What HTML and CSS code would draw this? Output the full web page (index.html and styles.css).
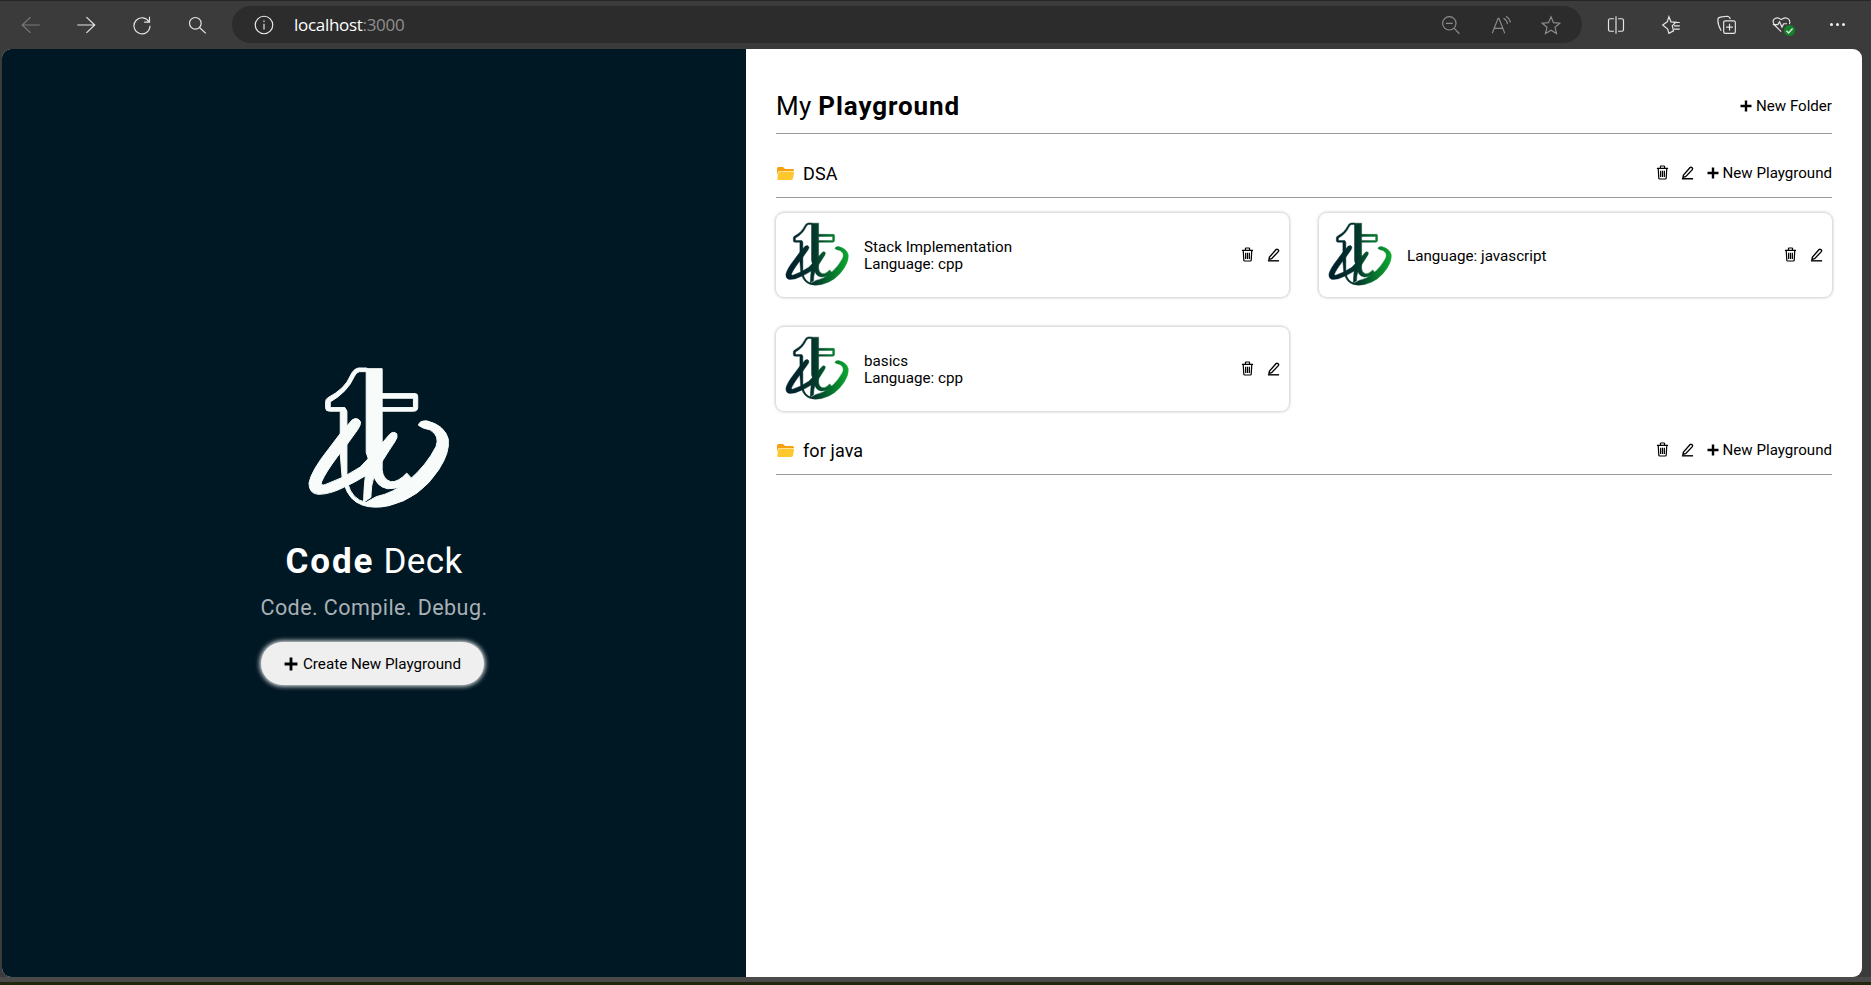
FILE: index.html
```html
<!DOCTYPE html>
<html lang="en">
<head>
<meta charset="utf-8">
<title>Code Deck</title>
<link rel="stylesheet" href="styles.css">
</head>
<body>
<svg class="defs" width="0" height="0" aria-hidden="true">
  <defs>
    <linearGradient id="logoGrad" gradientUnits="userSpaceOnUse" x1="230" y1="330" x2="590" y2="330">
      <stop offset="0" stop-color="#00222d"/>
      <stop offset="0.4" stop-color="#04382c"/>
      <stop offset="0.65" stop-color="#066a2e"/>
      <stop offset="1" stop-color="#0ca52f"/>
    </linearGradient>
    <symbol id="logo" viewBox="170 80 430 430">
      <path d="M350 86H325Q310 88 300 110Q285 148 232 176Q226 180 226 188V206Q226 216 238 216H270V345L276 420H290V216L284 205H240V188Q292 158 312 112Q318 98 328 97H350Z"/>
      <path fill-rule="evenodd" d="M348 88H396V163H495Q503 163 503 172V204Q503 216 490 216H396V392Q398 420 422 428Q444 430 470 402L490 424Q450 450 412 449Q376 442 368 400L348 340ZM396 177V205H490V177Z"/>
      <path d="M306 242Q322 232 331 248Q332 258 322 272Q290 318 262 352Q226 400 214 428Q210 442 226 436Q280 418 330 384Q378 336 418 286Q430 274 440 284Q444 294 434 308Q396 364 372 410Q362 440 362 475L340 490Q342 430 346 410Q310 432 282 444Q240 466 204 466Q176 464 176 432Q182 396 236 328Q270 280 306 242Z"/>
      <path d="M282 436L292 430Q304 482 348 490L378 473Q430 462 476 424Q530 378 558 322Q570 290 540 272Q516 268 505 258Q508 244 530 245Q584 258 595 300Q600 340 566 392Q510 478 416 500Q370 510 336 498Q296 484 282 436Z"/>
    </symbol>
    <symbol id="trash" viewBox="0 0 14 16">
      <path d="M1 3.500H13M4.800 3.300V1.600Q4.800 1 5.400 1H8.600Q9.200 1 9.200 1.600V3.300M2.400 3.700L3 14Q3.100 15 4 15H10Q10.900 15 11 14L11.600 3.700M5 6V12.800M7 6V12.800M9 6V12.800" fill="none" stroke="currentColor" stroke-width="1.300"/>
    </symbol>
    <symbol id="pencil" viewBox="0 0 14 15">
      <path d="M2.600 10.300L9.800 2.200Q10.600 1.400 11.600 2.100L12.200 2.700Q12.900 3.500 12.200 4.400L5 12L2.200 12.600Z" fill="none" stroke="currentColor" stroke-width="1.500"/>
      <path d="M1 14.300H13" stroke="currentColor" stroke-width="1.500"/>
    </symbol>
    <symbol id="folder" viewBox="0 0 17 13">
      <path d="M0 2Q0 0 1.500 0H6L8 2H15.500Q17 2 17 3.500V4H3Q1 4 .6 6L0 9Z" fill="#f5a00c"/>
      <path d="M2.800 4.600H16Q17.300 4.600 17 6L16 11.600Q15.800 13 14.400 13H1.400Q0 13 .3 11.600L1.400 5.800Q1.600 4.600 2.800 4.600Z" fill="#ffc72e"/>
    </symbol>
    <symbol id="plus" viewBox="0 0 12 12">
      <path d="M6 .5V11.500M.5 6H11.500" stroke="currentColor" stroke-width="2.400" fill="none"/>
    </symbol>
  </defs>
</svg>

<header class="toolbar">
  <button class="tool dim"><svg viewBox="0 0 24 24"><path d="M1.500 12H22.500M11.500 2.500L1.500 12L11.500 21.500"/></svg></button>
  <button class="tool"><svg viewBox="0 0 24 24"><path d="M1.500 12H22.500M12.500 2.500L22.500 12L12.500 21.500"/></svg></button>
  <button class="tool"><svg viewBox="0 0 24 24"><path d="M20.500 8.500A9.600 9.600 0 1 0 21.600 13M21 2V8.600H14.600"/></svg></button>
  <button class="tool"><svg viewBox="0 0 24 24"><circle cx="10" cy="10" r="7"/><path d="M15 15L22.500 22"/></svg></button>
  <div class="address">
    <svg class="info" viewBox="0 0 24 24"><circle cx="12" cy="12" r="10.500"/><path d="M12 10.500V17.500M12 6.600V8.400"/></svg>
    <span class="url">localhost<span class="port">:3000</span></span>
    <span class="address-tools">
      <svg class="atool" viewBox="0 0 24 24"><circle cx="10" cy="10" r="8"/><path d="M6 10H14M16 16L22 22.500"/></svg>
      <svg class="atool" viewBox="0 0 24 24"><path d="M1.500 22L8.500 4H9.500L16.500 22M4 16H14M15 4Q19 6 20 11M18 1.500Q22.500 4 23.500 9"/></svg>
      <svg class="atool" viewBox="0 0 24 24"><path d="M12 2L15 9.200L22.600 9.800L16.800 14.800L18.600 22.200L12 18.200L5.400 22.200L7.200 14.800L1.400 9.800L9 9.200Z"/></svg>
    </span>
  </div>
  <div class="right-tools">
    <button class="tool"><svg viewBox="0 0 24 24"><path d="M9.500 4.500H5Q3 4.500 3 6.500V17.500Q3 19.500 5 19.500H9.500M14.500 4.500H19Q21 4.500 21 6.500V17.500Q21 19.500 19 19.500H14.500M12 1.500V22.500"/></svg></button>
    <button class="tool"><svg viewBox="0 0 24 24"><path d="M9.500 2L12 8.200L18 8.600L13.500 12.800L15 19L9.500 22L8 17L2 12L7.500 8.200ZM15 9H22.500M15.500 13H22.500M15.500 17H22.500"/></svg></button>
    <button class="tool"><svg viewBox="0 0 24 24"><path d="M5 19Q1 12 1 6Q1 3 4 2.500L12 1.500Q15 1.500 16 5M8 8.500Q8 7 10 7H20Q22 7 22 9V20Q22 22 20 22H10Q8 22 8 20ZM15 10.500V18.500M11 14.500H19"/></svg></button>
    <button class="tool health">
      <svg viewBox="0 0 24 24"><path d="M11 20L3 12Q0 8 2.500 5Q6 1.500 11 5.500Q16 1.500 20 5Q22 7 21 11M1 11.500H7L9 8L12 14.500L14 10.500H18"/></svg>
      <span class="badge"><svg viewBox="0 0 10 10"><path d="M2.200 5.200L4.200 7.200L7.800 3.200"/></svg></span>
    </button>
    <button class="tool dots"><span></span><span></span><span></span></button>
  </div>
</header>

<main class="page">
  <section class="hero">
    <svg class="hero-logo"><use href="#logo"/></svg>
    <h1 class="hero-title"><b>Code</b> Deck</h1>
    <p class="hero-sub">Code. Compile. Debug.</p>
    <button class="create"><svg class="plus-lg"><use href="#plus"/></svg>Create New Playground</button>
  </section>

  <section class="board">
    <div class="board-head">
      <h2 class="board-title">My <b>Playground</b></h2>
      <a class="add"><svg class="plus"><use href="#plus"/></svg>New Folder</a>
    </div>

    <div class="folder-head">
      <svg class="folder-icon"><use href="#folder"/></svg>
      <span class="folder-name">DSA</span>
      <span class="folder-actions">
        <svg class="trash"><use href="#trash"/></svg>
        <svg class="pencil"><use href="#pencil"/></svg>
        <a class="add"><svg class="plus"><use href="#plus"/></svg>New Playground</a>
      </span>
    </div>
    <div class="cards">
      <article class="card">
        <svg class="card-logo"><use href="#logo"/></svg>
        <div class="card-text"><div>Stack Implementation</div><div>Language: cpp</div></div>
        <svg class="trash"><use href="#trash"/></svg>
        <svg class="pencil"><use href="#pencil"/></svg>
      </article>
      <article class="card">
        <svg class="card-logo"><use href="#logo"/></svg>
        <div class="card-text"><div>Language: javascript</div></div>
        <svg class="trash"><use href="#trash"/></svg>
        <svg class="pencil"><use href="#pencil"/></svg>
      </article>
      <article class="card">
        <svg class="card-logo"><use href="#logo"/></svg>
        <div class="card-text"><div>basics</div><div>Language: cpp</div></div>
        <svg class="trash"><use href="#trash"/></svg>
        <svg class="pencil"><use href="#pencil"/></svg>
      </article>
    </div>

    <div class="folder-head">
      <svg class="folder-icon"><use href="#folder"/></svg>
      <span class="folder-name">for java</span>
      <span class="folder-actions">
        <svg class="trash"><use href="#trash"/></svg>
        <svg class="pencil"><use href="#pencil"/></svg>
        <a class="add"><svg class="plus"><use href="#plus"/></svg>New Playground</a>
      </span>
    </div>
  </section>
</main>
<div class="taskbar"></div>
</body>
</html>
```

FILE: styles.css
```css
* { box-sizing: border-box; }
html, body { height: 100%; }
body {
  margin: 0;
  display: flex;
  flex-direction: column;
  overflow: hidden;
  background: #3b3b3b;
  font-family: Roboto, "Liberation Sans", sans-serif;
  color: #000;
}
.defs { position: absolute; }

/* browser chrome */
.toolbar {
  flex: 0 0 49px;
  display: flex;
  align-items: center;
  padding: 0 0 1px 3px;
  border-top: 1px solid #262626;
}
.tool {
  position: relative;
  flex: 0 0 55.5px;
  height: 40px;
  display: flex;
  align-items: center;
  justify-content: center;
  padding: 0;
  background: none;
  border: 0;
  color: #e6e6e6;
}
.tool svg, .address svg {
  width: 20px;
  height: 20px;
  fill: none;
  stroke: currentColor;
  stroke-width: 1.4;
}
.tool.dim { color: #7a7a7a; }
.address {
  flex: 0 0 1350px;
  margin-left: 7px;
  height: 37px;
  display: flex;
  align-items: center;
  padding: 0 21px 0 22px;
  border-radius: 19px;
  background: #2c2c2c;
  color: #e8e8e8;
}
.info { flex: none; }
.url {
  margin-left: 20px;
  font: 17px "Open Sans", sans-serif;
  letter-spacing: -.3px;
  color: #fff;
}
.port { color: #8f8f8f; }
.address-tools {
  margin-left: auto;
  display: flex;
  gap: 30px;
}
.atool { color: #8c8c8c; }
.right-tools {
  display: flex;
  margin-left: 6px;
}
.badge {
  position: absolute;
  left: 29px;
  top: 20px;
  width: 11px;
  height: 11px;
  border-radius: 50%;
  background: #14802a;
  display: flex;
}
.tool .badge svg {
  width: 11px;
  height: 11px;
  stroke: #cfe8d2;
}
.dots { gap: 3px; }
.dots span {
  width: 3px;
  height: 3px;
  border-radius: 50%;
  background: #f0f0f0;
}

/* page */
.page {
  flex: 1;
  min-height: 0;
  display: flex;
  margin: 0 9px 0 2px;
  border-radius: 9px;
  overflow: hidden;
  background: #fff;
}
.taskbar {
  flex: 0 0 8px;
  border-top: 5px solid #4a4a4a;
  background: #22280f;
}

/* left hero */
.hero {
  flex: 0 0 744px;
  display: flex;
  flex-direction: column;
  align-items: center;
  justify-content: center;
  padding-top: 25px;
  background: #001824;
  color: #fff;
}
.hero-logo {
  width: 143px;
  height: 143px;
  margin-left: 8px;
  fill: #f7fbfa;
  stroke: #f7fbfa;
  stroke-width: 3px;
}
.hero-title {
  margin: 31px 0 0;
  font-size: 35px;
  line-height: 44px;
  font-weight: 400;
  letter-spacing: .4px;
}
.hero-title b {
  font-weight: 700;
  letter-spacing: 1.9px;
}
.hero-sub {
  margin: 10px 0 0;
  font-size: 21.5px;
  line-height: 28px;
  letter-spacing: .43px;
  color: #a9b1b6;
}
.create {
  margin: 20px 3px 0 0;
  width: 223px;
  height: 43px;
  display: flex;
  align-items: center;
  justify-content: center;
  gap: 5px;
  border: 0;
  border-radius: 22px;
  background: #efefef;
  box-shadow: 0 0 5px 1px #fff;
  font: 15.2px Roboto, sans-serif;
  color: #000;
}
.plus-lg { width: 14px; height: 14px; }

/* right board */
.board {
  flex: 1;
  min-width: 0;
  padding: 30px 30px 0 30px;
}
.board-head {
  height: 55px;
  display: flex;
  align-items: center;
  justify-content: space-between;
  border-bottom: 1px solid #999;
}
.board-title {
  margin: 0;
  font-size: 26px;
  font-weight: 400;
  letter-spacing: .3px;
}
.board-title b {
  font-weight: 700;
  letter-spacing: .9px;
}
.add {
  display: inline-flex;
  align-items: center;
  gap: 4px;
  font-size: 15.1px;
}
.plus { width: 12px; height: 12px; }
.folder-head {
  height: 43px;
  margin-top: 21px;
  display: flex;
  align-items: center;
  padding-bottom: 5px;
  border-bottom: 1px solid #999;
}
.folder-icon { width: 17px; height: 13px; flex: none; margin: 0 9px 0 1px; }
.folder-name { font-size: 18px; letter-spacing: .1px; }
.folder-actions {
  margin-left: auto;
  margin-bottom: 2px;
  display: flex;
  align-items: center;
}
.folder-actions .trash { margin-right: 12px; }
.folder-actions .pencil { margin-right: 13px; }
.trash { width: 13px; height: 15px; flex: none; }
.pencil { width: 13px; height: 15px; flex: none; }
.cards {
  margin-top: 15px;
  display: grid;
  grid-template-columns: 1fr 1fr;
  gap: 30px 30px;
}
.card {
  height: 84px;
  display: flex;
  align-items: center;
  padding: 0 9px 0 9px;
  border-radius: 8px;
  background: #fff;
  box-shadow: 0 0 3px 1px rgba(0, 0, 0, .2);
}
.card .trash, .card .pencil { margin-bottom: 2px; }
.card-logo {
  width: 64px;
  height: 64px;
  flex: none;
  margin-bottom: 2px;
  fill: url(#logoGrad);
  stroke: url(#logoGrad);
  stroke-width: 3px;
}
.card-text {
  flex: 1;
  margin: 2px 0 0 15px;
  font-size: 15.2px;
  line-height: 17px;
}
.card .trash { margin-right: 13px; }
```
